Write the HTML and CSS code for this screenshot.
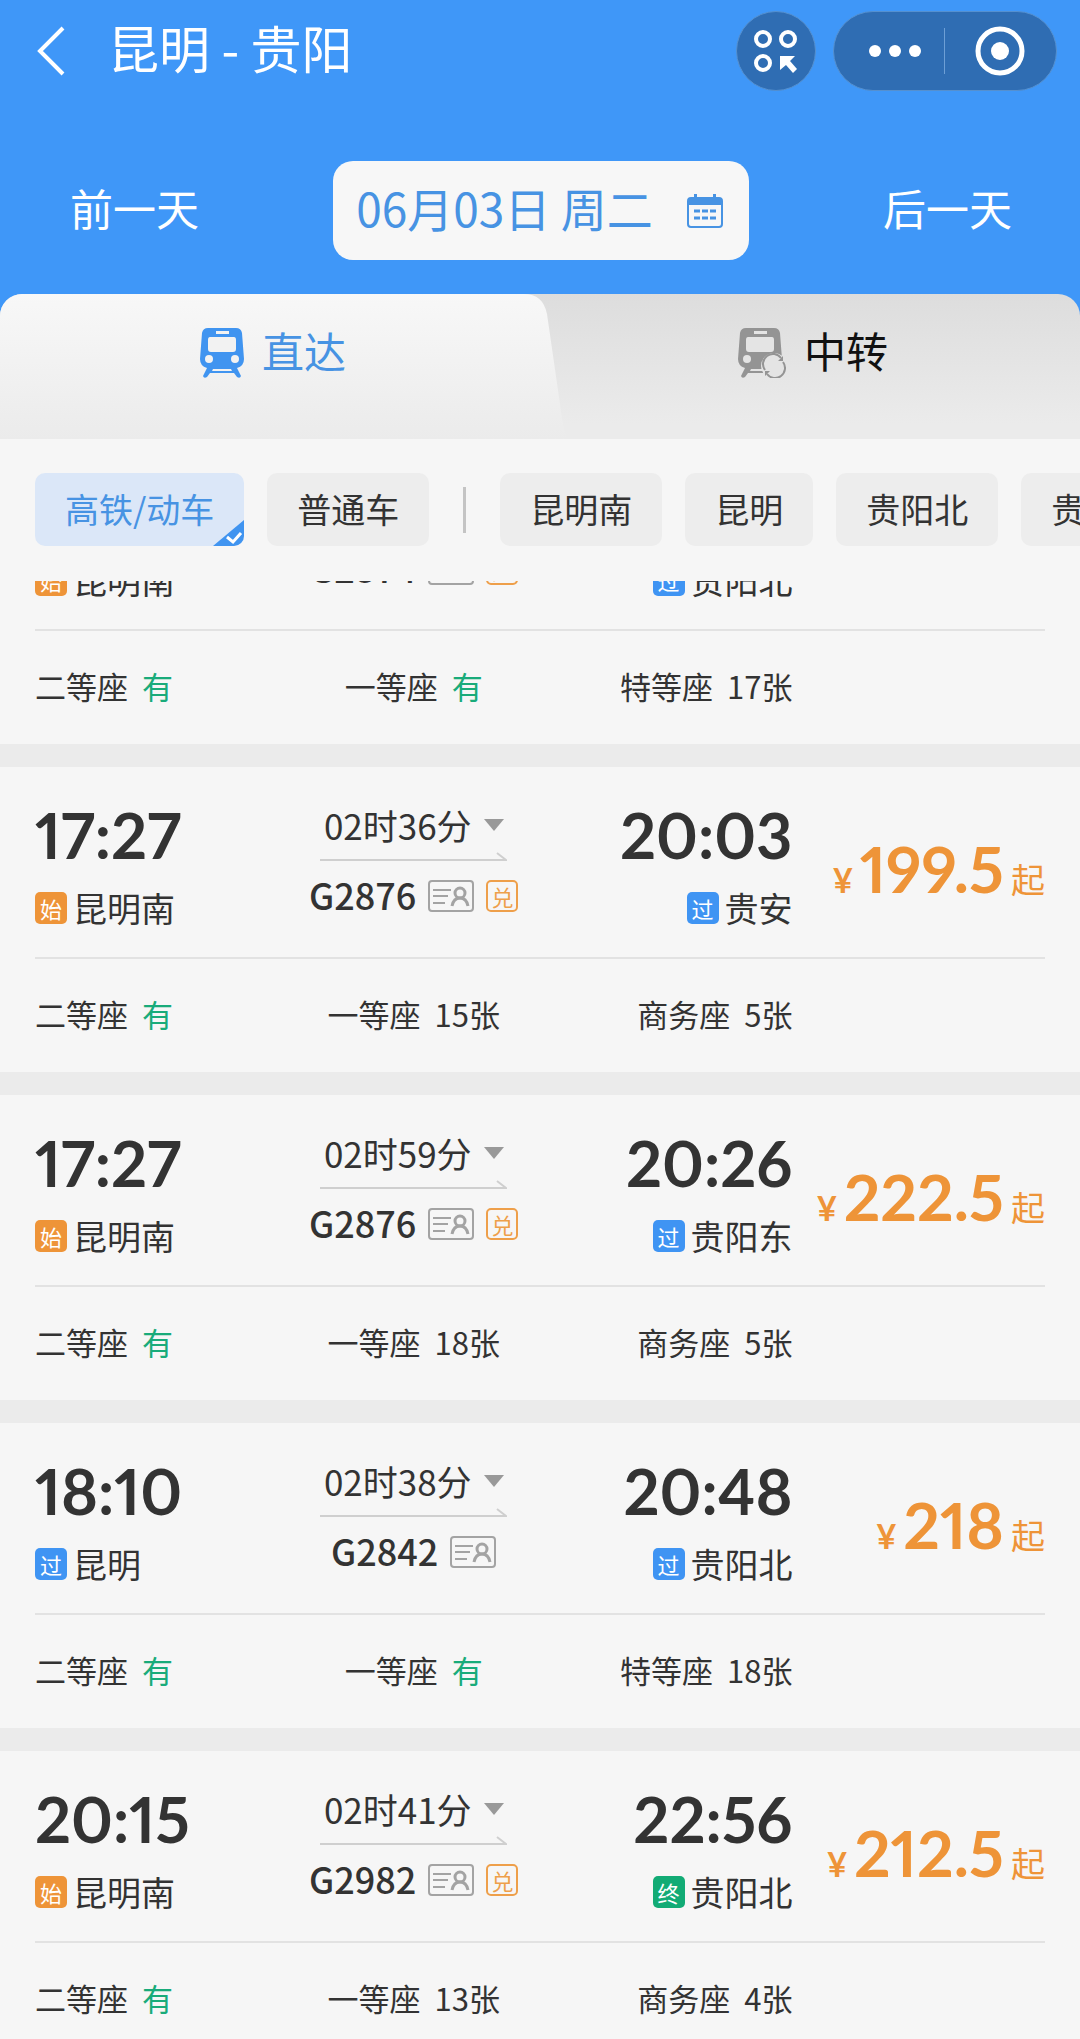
FILE: index.html
```html
<!DOCTYPE html>
<html lang="zh-CN">
<head>
    <meta charset="UTF-8">
    <meta name="viewport" content="width=device-width, initial-scale=1.0">
    <title>昆明 - 贵阳</title>
    <link rel="stylesheet" href="styles.css">
</head>
<body>
    <svg class="sprite" aria-hidden="true">
        <symbol id="icon-idcard" viewBox="0 0 46 32">
            <g fill="none" stroke="#a3a3a3">
                <rect x="1" y="1" width="44" height="30" rx="3" stroke-width="2"/>
                <path d="M5 10h18M5 16h15M5 23h12" stroke-width="2"/>
                <circle cx="32" cy="13" r="5" stroke-width="3"/>
                <path d="M24 26c1-5 4-8 8-8s7 3 8 8" stroke-width="3"/>
            </g>
        </symbol>
        <symbol id="icon-arrow" viewBox="0 0 187 10">
            <path d="M0 8h186L177 1" fill="none" stroke="#cfcfcf" stroke-width="2"/>
        </symbol>
    </svg>

    <div class="app">
        <header class="header">
            <div class="topbar">
                <a class="back" href="#" aria-label="返回">
                    <svg width="30" height="50" viewBox="0 0 30 50"><path d="M27 2L4 25l23 23" fill="none" stroke="#fff" stroke-width="4"/></svg>
                </a>
                <h1>昆明 - 贵阳</h1>
                <button class="round-btn" aria-label="小程序">
                    <svg width="44" height="44" viewBox="0 0 44 44">
                        <g fill="none" stroke="#fff" stroke-width="4">
                            <circle cx="9" cy="10" r="7"/>
                            <circle cx="34" cy="10" r="7"/>
                            <circle cx="9" cy="34" r="7"/>
                        </g>
                        <path d="M26 27h15l-5 5 7 8-4 4-7-8-6 5z" fill="#fff"/>
                    </svg>
                </button>
                <div class="capsule">
                    <button class="more" aria-label="更多">
                        <svg width="52" height="12" viewBox="0 0 52 12"><g fill="#fff"><circle cx="6" cy="6" r="6"/><circle cx="26" cy="6" r="6"/><circle cx="46" cy="6" r="6"/></g></svg>
                    </button>
                    <span class="capsule-line"></span>
                    <button aria-label="关闭">
                        <svg width="50" height="50" viewBox="0 0 50 50"><circle cx="25" cy="25" r="22" fill="none" stroke="#fff" stroke-width="5"/><circle cx="25" cy="25" r="9" fill="#fff"/></svg>
                    </button>
                </div>
            </div>
            <nav class="date-nav">
                <button class="day">前一天</button>
                <button class="date">
                    <span class="date-text">06月03日 周二</span>
                    <svg width="36" height="34" viewBox="0 0 36 34">
                        <rect x="1" y="4" width="34" height="29" rx="3" fill="none" stroke="#4793e3" stroke-width="2"/>
                        <path d="M1 5h34v6H1zM7 0h3v5H7zM26 0h3v5h-3z" fill="#4793e3"/>
                        <path d="M7 17h22M7 24h22" stroke="#4793e3" stroke-width="3" stroke-dasharray="6 2"/>
                    </svg>
                </button>
                <button class="day">后一天</button>
            </nav>
        </header>

        <div class="tabs-wrap">
            <div class="tabs" role="tablist">
                <svg class="tab-shape" viewBox="0 0 1080 145" preserveAspectRatio="none" aria-hidden="true">
                    <defs>
                        <linearGradient id="tabFill" x1="0" y1="0" x2="0" y2="1">
                            <stop offset="0" stop-color="#f8f8f8"/>
                            <stop offset="1" stop-color="#ebebeb"/>
                        </linearGradient>
                    </defs>
                    <path d="M0 0H524Q543 0 547 20L560 110Q564 145 570 145H0Z" fill="url(#tabFill)"/>
                </svg>
                <button class="tab active" role="tab" aria-selected="true">
                    <svg width="44" height="50" viewBox="0 0 44 50">
                        <path d="M8 0h28q5 0 6 5l2 26q0 7-7 9l4 8q-1 3-4 1l-3-4H10l-3 4q-3 2-4-1l4-8q-7-2-7-9L2 5q1-5 6-5z" fill="#4094f0"/>
                        <path d="M16 3h13v3H16zM10 9h24q2 0 2 3v9q0 3-3 3H11q-3 0-3-3v-9q0-3 2-3zM13 41h18l1 2H12z" fill="#f2f2f2"/>
                        <circle cx="9" cy="31" r="4" fill="#f2f2f2"/>
                        <circle cx="35" cy="31" r="4" fill="#f2f2f2"/>
                    </svg>
                    <span>直达</span>
                </button>
                <button class="tab" role="tab" aria-selected="false">
                    <svg width="48" height="50" viewBox="0 0 48 50">
                        <path d="M8 0h28q5 0 6 5l2 26-10 14H10l-3 4q-3 2-4-1l4-8q-7-2-7-9L2 5q1-5 6-5z" fill="#949494"/>
                        <path d="M16 3h13v3H16zM10 9h24q2 0 2 3v9q0 3-3 3H11q-3 0-3-3v-9q0-3 2-3zM13 41h18l1 2H12z" fill="#e4e4e4"/>
                        <circle cx="9" cy="31" r="4" fill="#e4e4e4"/>
                        <circle cx="36" cy="38" r="13" fill="#e4e4e4"/>
                        <path d="M27 42a10 10 0 0 1 16-12M45 34a10 10 0 0 1-16 12" fill="none" stroke="#949494" stroke-width="2"/>
                        <path d="M45 28v5h-5zM27 48v-5h5z" fill="#949494"/>
                    </svg>
                    <span>中转</span>
                </button>
            </div>
        </div>

        <div class="filters">
            <button class="chip checked" aria-pressed="true">高铁/动车
                <svg class="chip-check" width="31" height="26" viewBox="0 0 31 26" aria-hidden="true"><path d="M0 26L31 0v26z" fill="#4094f0"/><path d="M14 17l6 5 8-9" fill="none" stroke="#fff" stroke-width="3"/></svg>
            </button>
            <button class="chip">普通车</button>
            <span class="chip-line"></span>
            <button class="chip">昆明南</button>
            <button class="chip">昆明</button>
            <button class="chip">贵阳北</button>
            <button class="chip">贵阳东</button>
        </div>

        <main class="train-list">
            <article class="card scrolled">
                <div class="trip">
                    <div class="stop">
                        <div class="station"><span class="tag start">始</span>昆明南</div>
                    </div>
                    <div class="info">
                        <div class="number"><span>G2874</span><svg class="idcard"><use href="#icon-idcard"/></svg><span class="tag redeem">兑</span></div>
                    </div>
                    <div class="stop end">
                        <div class="station"><span class="tag pass">过</span>贵阳北</div>
                    </div>
                </div>
                <div class="seats">
                    <span>二等座<b class="has">有</b></span>
                    <span>一等座<b class="has">有</b></span>
                    <span>特等座<b>17张</b></span>
                </div>
            </article>

            <article class="card">
                <div class="trip">
                    <div class="stop">
                        <div class="time">17:27</div>
                        <div class="station"><span class="tag start">始</span>昆明南</div>
                    </div>
                    <div class="info">
                        <button class="duration">02时36分</button>
                        <svg class="arrow"><use href="#icon-arrow"/></svg>
                        <div class="number"><span>G2876</span><svg class="idcard"><use href="#icon-idcard"/></svg><span class="tag redeem">兑</span></div>
                    </div>
                    <div class="stop end">
                        <div class="time">20:03</div>
                        <div class="station"><span class="tag pass">过</span>贵安</div>
                    </div>
                    <div class="price"><small>¥</small><strong>199.5</strong><span>起</span></div>
                </div>
                <div class="seats">
                    <span>二等座<b class="has">有</b></span>
                    <span>一等座<b>15张</b></span>
                    <span>商务座<b>5张</b></span>
                </div>
            </article>

            <article class="card">
                <div class="trip">
                    <div class="stop">
                        <div class="time">17:27</div>
                        <div class="station"><span class="tag start">始</span>昆明南</div>
                    </div>
                    <div class="info">
                        <button class="duration">02时59分</button>
                        <svg class="arrow"><use href="#icon-arrow"/></svg>
                        <div class="number"><span>G2876</span><svg class="idcard"><use href="#icon-idcard"/></svg><span class="tag redeem">兑</span></div>
                    </div>
                    <div class="stop end">
                        <div class="time">20:26</div>
                        <div class="station"><span class="tag pass">过</span>贵阳东</div>
                    </div>
                    <div class="price"><small>¥</small><strong>222.5</strong><span>起</span></div>
                </div>
                <div class="seats">
                    <span>二等座<b class="has">有</b></span>
                    <span>一等座<b>18张</b></span>
                    <span>商务座<b>5张</b></span>
                </div>
            </article>

            <article class="card">
                <div class="trip">
                    <div class="stop">
                        <div class="time">18:10</div>
                        <div class="station"><span class="tag pass">过</span>昆明</div>
                    </div>
                    <div class="info">
                        <button class="duration">02时38分</button>
                        <svg class="arrow"><use href="#icon-arrow"/></svg>
                        <div class="number"><span>G2842</span><svg class="idcard"><use href="#icon-idcard"/></svg></div>
                    </div>
                    <div class="stop end">
                        <div class="time">20:48</div>
                        <div class="station"><span class="tag pass">过</span>贵阳北</div>
                    </div>
                    <div class="price"><small>¥</small><strong>218</strong><span>起</span></div>
                </div>
                <div class="seats">
                    <span>二等座<b class="has">有</b></span>
                    <span>一等座<b class="has">有</b></span>
                    <span>特等座<b>18张</b></span>
                </div>
            </article>

            <article class="card">
                <div class="trip">
                    <div class="stop">
                        <div class="time">20:15</div>
                        <div class="station"><span class="tag start">始</span>昆明南</div>
                    </div>
                    <div class="info">
                        <button class="duration">02时41分</button>
                        <svg class="arrow"><use href="#icon-arrow"/></svg>
                        <div class="number"><span>G2982</span><svg class="idcard"><use href="#icon-idcard"/></svg><span class="tag redeem">兑</span></div>
                    </div>
                    <div class="stop end">
                        <div class="time">22:56</div>
                        <div class="station"><span class="tag terminal">终</span>贵阳北</div>
                    </div>
                    <div class="price"><small>¥</small><strong>212.5</strong><span>起</span></div>
                </div>
                <div class="seats">
                    <span>二等座<b class="has">有</b></span>
                    <span>一等座<b>13张</b></span>
                    <span>商务座<b>4张</b></span>
                </div>
            </article>
        </main>
    </div>
</body>
</html>
```

FILE: styles.css
```css
* {
    box-sizing: border-box;
}
body {
    margin: 0;
    font-family: "Noto Sans CJK SC", sans-serif;
    color: #333;
    background: #f6f6f6;
}
button {
    font: inherit;
    color: inherit;
    background: none;
    border: none;
    padding: 0;
    cursor: pointer;
}
svg {
    display: block;
    flex-shrink: 0;
}
.sprite {
    position: absolute;
    width: 0;
    height: 0;
}
.app {
    height: 100vh;
    display: flex;
    flex-direction: column;
    overflow: hidden;
}

/* Header */
.header {
    background: #3f97f8;
    color: #fff;
    padding: 11px 23px 34px 36px;
}
.topbar {
    display: flex;
    align-items: center;
    height: 80px;
}
.topbar h1 {
    flex: 1;
    margin: 0 0 0 42px;
    padding-bottom: 8px;
    font-size: 51px;
    line-height: 72px;
    font-weight: 400;
}
.round-btn {
    width: 80px;
    height: 80px;
    margin-right: 17px;
    display: flex;
    align-items: center;
    justify-content: center;
    background: #2f6db3;
    border: 1px solid #5590cf;
    border-radius: 50%;
}
.capsule {
    width: 224px;
    height: 80px;
    display: flex;
    align-items: center;
    background: #2f6db3;
    border: 1px solid #5590cf;
    border-radius: 40px;
}
.capsule button {
    width: 110px;
    display: flex;
    justify-content: center;
}
.capsule .more {
    padding-left: 12px;
}
.capsule-line {
    width: 1px;
    height: 46px;
    background: #6d9fd6;
}
.date-nav {
    display: flex;
    justify-content: space-between;
    align-items: center;
    margin-top: 70px;
    padding: 0 45px 0 34px;
}
.day,
.date-text {
    padding-bottom: 8px;
    line-height: 60px;
}
.day {
    font-size: 43px;
}
.date {
    display: flex;
    align-items: center;
    justify-content: space-between;
    gap: 34px;
    height: 99px;
    padding: 0 26px 0 23px;
    font-size: 46px;
    color: #4793e3;
    background: #f7f7f7;
    border-radius: 20px;
}

/* Tabs */
.tabs-wrap {
    background: #3f97f8;
}
.tabs {
    position: relative;
    display: flex;
    height: 145px;
    padding-bottom: 27px;
    background: linear-gradient(#dddddd, #ebebeb 90%);
    border-radius: 22px 22px 0 0;
    overflow: hidden;
}
.tab-shape {
    position: absolute;
    top: 0;
    left: 0;
    width: 100%;
    height: 100%;
}
.tab {
    position: relative;
    flex: 1;
    display: flex;
    align-items: center;
    justify-content: center;
    gap: 18px;
    padding-left: 6px;
    font-size: 42px;
    color: #111;
}
.tab span {
    padding-bottom: 6px;
    line-height: 60px;
}
.tab.active {
    color: #4793e3;
}

/* Filters */
.filters {
    display: flex;
    align-items: center;
    gap: 23px;
    padding: 34px 0 35px 35px;
    overflow: hidden;
}
.chip {
    position: relative;
    flex-shrink: 0;
    height: 73px;
    padding: 0 30px 2px;
    font-size: 34px;
    white-space: nowrap;
    background: #ededed;
    border-radius: 10px;
    overflow: hidden;
}
.chip.checked {
    color: #4793e3;
    background: #dbe7f8;
}
.chip-check {
    position: absolute;
    right: 0;
    bottom: 0;
}
.chip-line {
    flex-shrink: 0;
    width: 3px;
    height: 46px;
    margin: 0 11px;
    background: #c4c4c4;
}

/* Train list */
.train-list {
    flex: 1;
    min-height: 0;
    overflow-y: auto;
    scrollbar-width: none;
}
.card {
    border-bottom: 23px solid #ebebeb;
    padding: 0 35px;
}
.trip {
    display: grid;
    grid-template-columns: repeat(4, 1fr);
    align-items: center;
    padding: 28px 0 29px;
    border-bottom: 2px solid #e2e2e2;
}
/* first card is half hidden under the filters */
.scrolled {
    margin-top: -34px;
}
.scrolled .trip {
    align-items: start;
    padding-top: 0;
}
.time {
    font-family: Lato, sans-serif;
    font-size: 63px;
    line-height: 80px;
    font-weight: 700;
    font-feature-settings: "pnum";
}
.station {
    display: flex;
    align-items: center;
    gap: 6px;
    margin-top: 13px;
    font-size: 34px;
    line-height: 40px;
}
.end {
    text-align: right;
}
.end .station {
    justify-content: flex-end;
}
.tag {
    width: 32px;
    height: 32px;
    font-size: 22px;
    line-height: 32px;
    font-weight: 400;
    text-align: center;
    color: #fff;
    border-radius: 5px;
}
.tag.start {
    background: #ee9438;
}
.tag.pass {
    background: #3f94f3;
}
.tag.terminal {
    background: #12ab75;
}
.tag.redeem {
    color: #ee9f4a;
    border: 2px solid #ee9f4a;
    line-height: 28px;
}
.info {
    display: flex;
    flex-direction: column;
    align-items: center;
}
.duration {
    display: flex;
    align-items: center;
    gap: 12px;
    font-size: 35px;
    line-height: 40px;
}
.duration::after {
    content: "";
    border: 10px solid transparent;
    border-top: 12px solid #999;
    border-bottom: 0;
}
.arrow {
    width: 187px;
    height: 10px;
    margin: 7px 0 12px;
}
.number {
    display: flex;
    align-items: center;
    gap: 12px;
    height: 44px;
    font-size: 36px;
    line-height: 40px;
    font-weight: 500;
}
.number span:first-child {
    padding-bottom: 4px;
}
.idcard {
    width: 46px;
    height: 32px;
}
.price {
    display: flex;
    justify-content: flex-end;
    align-items: baseline;
    gap: 7px;
    padding-top: 26px;
    color: #ee9438;
    font-size: 34px;
    line-height: 80px;
    white-space: nowrap;
}
.price small {
    font-family: Lato, sans-serif;
    font-weight: 700;
    font-size: 34px;
}
.price strong {
    font-family: Lato, sans-serif;
    font-size: 64px;
    font-feature-settings: "pnum";
}
.seats {
    display: grid;
    grid-template-columns: repeat(4, 1fr);
    padding: 35px 0 38px;
    font-size: 31px;
    line-height: 40px;
    white-space: nowrap;
}
.seats span:nth-child(2) {
    text-align: center;
}
.seats span:nth-child(3) {
    text-align: right;
}
.seats b {
    margin-left: 14px;
    font-weight: 400;
}
.seats .has {
    color: #19ab7a;
}
```
